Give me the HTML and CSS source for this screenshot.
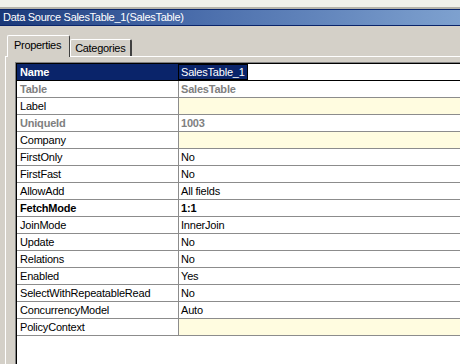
FILE: index.html
```html
<!DOCTYPE html>
<html lang="en">
<head>
    <meta charset="UTF-8">
    <title>Data Source SalesTable_1(SalesTable)</title>
    <link rel="stylesheet" href="styles.css">
</head>
<body>
    <div class="top-strip"></div>
    <div class="title-bar">Data Source SalesTable_1(SalesTable)</div>
    <div class="tabs">
        <div class="tab active">Properties</div>
        <div class="tab">Categories</div>
    </div>
    <div class="panel">
        <div class="grid">
            <div class="row selected">
                <div class="label bold">Name</div>
                <div class="value"><span class="edit">SalesTable_1</span></div>
            </div>
            <div class="row readonly">
                <div class="label bold">Table</div>
                <div class="value bold">SalesTable</div>
            </div>
            <div class="row">
                <div class="label">Label</div>
                <div class="value empty"></div>
            </div>
            <div class="row readonly">
                <div class="label bold">UniqueId</div>
                <div class="value bold">1003</div>
            </div>
            <div class="row">
                <div class="label">Company</div>
                <div class="value empty"></div>
            </div>
            <div class="row">
                <div class="label">FirstOnly</div>
                <div class="value">No</div>
            </div>
            <div class="row">
                <div class="label">FirstFast</div>
                <div class="value">No</div>
            </div>
            <div class="row">
                <div class="label">AllowAdd</div>
                <div class="value">All fields</div>
            </div>
            <div class="row">
                <div class="label bold">FetchMode</div>
                <div class="value bold">1:1</div>
            </div>
            <div class="row">
                <div class="label">JoinMode</div>
                <div class="value">InnerJoin</div>
            </div>
            <div class="row">
                <div class="label">Update</div>
                <div class="value">No</div>
            </div>
            <div class="row">
                <div class="label">Relations</div>
                <div class="value">No</div>
            </div>
            <div class="row">
                <div class="label">Enabled</div>
                <div class="value">Yes</div>
            </div>
            <div class="row">
                <div class="label">SelectWithRepeatableRead</div>
                <div class="value">No</div>
            </div>
            <div class="row">
                <div class="label">ConcurrencyModel</div>
                <div class="value">Auto</div>
            </div>
            <div class="row">
                <div class="label">PolicyContext</div>
                <div class="value empty"></div>
            </div>
        </div>
    </div>
</body>
</html>
```

FILE: styles.css
```css
html, body {
    margin: 0;
    padding: 0;
}
body {
    width: 460px;
    height: 364px;
    overflow: hidden;
    background-color: #d4d0c8;
    font-family: 'Liberation Sans', Arial, sans-serif;
    font-size: 11px;
    color: #000;
    display: flex;
    flex-direction: column;
}
.top-strip {
    height: 7px;
    background-color: #f1f0ea;
    border-bottom: 2px solid #b5b2a9;
}
.title-bar {
    height: 15px;
    line-height: 15px;
    padding-left: 3px;
    color: #fff;
    letter-spacing: -0.3px;
    background: linear-gradient(to right, #1a3878 0%, #4366a6 35%, #7ea1cf 100%);
    border-top: 1px solid #0a246a;
    border-bottom: 1px solid #0a246a;
    white-space: nowrap;
}
.tabs {
    display: flex;
    align-items: flex-end;
    margin-top: 9px;
    padding-left: 7px;
    height: 21px;
    letter-spacing: -0.3px;
}
.tab {
    box-sizing: border-box;
    padding: 0 5px 0 4px;
    height: 17px;
    line-height: 16px;
    background-color: #d4d0c8;
    border-top: 1px solid #fff;
    border-left: 1px solid #fff;
    border-right: 2px solid #404040;
    border-top-left-radius: 2px;
    border-top-right-radius: 2px;
}
.tab.active {
    height: 22px;
    line-height: 19px;
    padding: 0 8px 0 6px;
    margin-bottom: -1px;
    position: relative;
    z-index: 1;
    border-right: 1px solid #404040;
}
.panel {
    flex: 1;
    margin-left: 5px;
    border-top: 1px solid #fff;
    border-left: 1px solid #fff;
    padding: 5px 0 0 9px;
    display: flex;
}
.grid {
    flex: 1;
    background-color: #fff;
    border-top: 1px solid #808080;
    border-left: 1px solid #808080;
    box-shadow: inset 1px 1px 0 #000;
    padding: 1px 0 0 1px;
    letter-spacing: -0.2px;
}
.row {
    display: flex;
    height: 16px;
    border-bottom: 1px solid #8c8c8c;
    line-height: 16px;
    white-space: nowrap;
}
.label {
    width: 158px;
    padding-left: 3px;
    border-right: 1px solid #8c8c8c;
}
.value {
    flex: 1;
    padding-left: 2px;
}
.bold {
    font-weight: bold;
}
.readonly {
    color: #808080;
}
.empty {
    background-color: #fffce0;
}
.selected {
    border-bottom: 1px solid #000;
}
.selected .label {
    background-color: #0a246a;
    color: #fff;
    border-right: 1px solid #0a246a;
}
.selected .value {
    padding-left: 0;
    display: flex;
    align-items: center;
}
.edit {
    background-color: #0a246a;
    color: #fff;
    padding: 0 2px;
    line-height: 14px;
    outline: 1px solid #000;
}
```
